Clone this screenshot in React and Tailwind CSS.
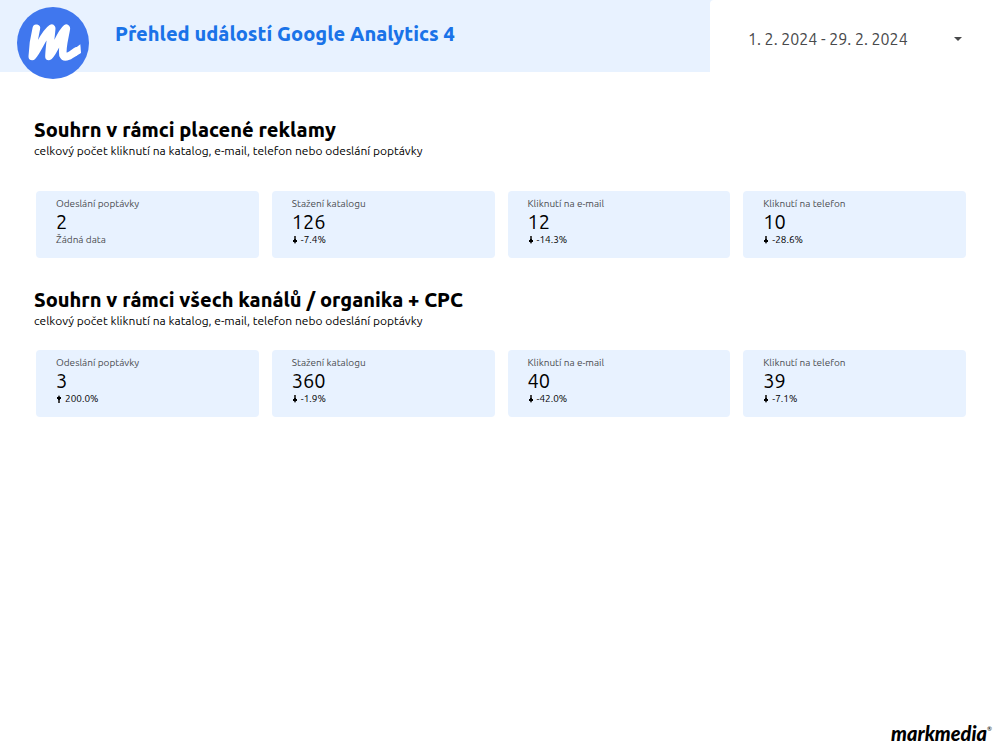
import { useState } from 'react'

const PAID = [
  { label: 'Odeslání poptávky', value: '2' },
  { label: 'Stažení katalogu', value: '126', change: '-7.4%' },
  { label: 'Kliknutí na e-mail', value: '12', change: '-14.3%' },
  { label: 'Kliknutí na telefon', value: '10', change: '-28.6%' },
]

const ALL_CHANNELS = [
  { label: 'Odeslání poptávky', value: '3', change: '200.0%' },
  { label: 'Stažení katalogu', value: '360', change: '-1.9%' },
  { label: 'Kliknutí na e-mail', value: '40', change: '-42.0%' },
  { label: 'Kliknutí na telefon', value: '39', change: '-7.1%' },
]

function Logo() {
  return (
    <svg viewBox="0 0 216 216" className="w-[72px] h-[72px] shrink-0" aria-hidden="true">
      <circle cx="108" cy="108" r="108" fill="#4077ee" />
      <path
        d="M58 64 C51 92 47 122 46 148 C65 128 79 80 104 64 C102 90 97 122 96 148 C116 128 128 80 148 64 C144 90 134 122 138 144 C144 158 164 142 178 132"
        fill="none"
        stroke="#fff"
        strokeWidth="23"
        strokeLinecap="round"
        strokeLinejoin="round"
      />
      <path d="M164 132L190 112L192 138L176 148z" fill="#fff" />
    </svg>
  )
}

function Arrow({ up }) {
  return (
    <svg viewBox="0 0 6 8" className={`w-[6px] h-[8px] ${up ? 'rotate-180' : ''}`} aria-hidden="true">
      <path d="M2 0h2v3H2z" fill="#444" />
      <path d="M2 3h2v1h1v2H4l-1 2-1-2H1V4h1z" fill="#000" />
    </svg>
  )
}

function ScoreCard({ label, value, change }) {
  return (
    <div className="bg-[#e8f2ff] rounded-sm pl-5 pt-[5px] pb-2.5">
      <dt className="text-[10px] leading-4 text-[#4a4c50]">{label}</dt>
      <dd className="text-xl leading-5 text-black">{value}</dd>
      {change ? (
        <dd className="flex items-center gap-[3px] text-[10px] leading-4 text-black">
          <Arrow up={!change.startsWith('-')} /> {change}
        </dd>
      ) : (
        <dd className="text-[10px] leading-4 text-[#4a4c50]">Žádná data</dd>
      )}
    </div>
  )
}

function Section({ title, cards, className, listClassName }) {
  return (
    <section className={className}>
      <h2 className="text-xl leading-7 font-extrabold">{title}</h2>
      <p className="text-xs leading-[14px]">celkový počet kliknutí na katalog, e-mail, telefon nebo odeslání poptávky</p>
      <dl className={`grid grid-cols-4 gap-[13px] pl-0.5 ${listClassName}`}>
        {cards.map(c => (
          <ScoreCard key={c.label} {...c} />
        ))}
      </dl>
    </section>
  )
}

export default function App() {
  const [open, setOpen] = useState(false)

  return (
    <div className="min-h-screen flex flex-col bg-white text-black font-['Ubuntu','Noto_Sans',sans-serif]">
      <header className="flex h-[72px] bg-linear-to-b from-[#e8f2ff] from-50% to-white to-50%">
        <div className="flex-1 flex items-start bg-[#e8f2ff] pl-[17px] pt-[7px]">
          <Logo />
          <h1 className="pl-[26px] pt-[13px] text-xl leading-7 font-extrabold text-[#1a73e8]">Přehled událostí Google Analytics 4</h1>
        </div>
        <button
          type="button"
          aria-expanded={open}
          onClick={() => setOpen(!open)}
          className="w-[290px] rounded-tl-sm bg-white flex items-center justify-between pl-[38px] pr-[38px] pt-1.5 text-base text-[#48494b]"
        >
          1. 2. 2024 - 29. 2. 2024
          <svg viewBox="0 0 8 4" className="w-2 h-1" aria-hidden="true">
            <path d="M0 0h8L4 4z" fill="#48494b" />
          </svg>
        </button>
      </header>

      <main className="flex-1 px-[34px]">
        <Section title="Souhrn v rámci placené reklamy" cards={PAID} className="pt-11" listClassName="mt-[33px]" />
        <Section title="Souhrn v rámci všech kanálů / organika + CPC" cards={ALL_CHANNELS} className="pt-7" listClassName="mt-[22px]" />
      </main>

      <footer className="flex justify-end items-start px-2 pb-0.5 font-['Lato',sans-serif]">
        <span className="text-xl leading-7 font-black italic">markmedia</span>
        <span className="text-[6px] leading-5">®</span>
      </footer>
    </div>
  )
}
